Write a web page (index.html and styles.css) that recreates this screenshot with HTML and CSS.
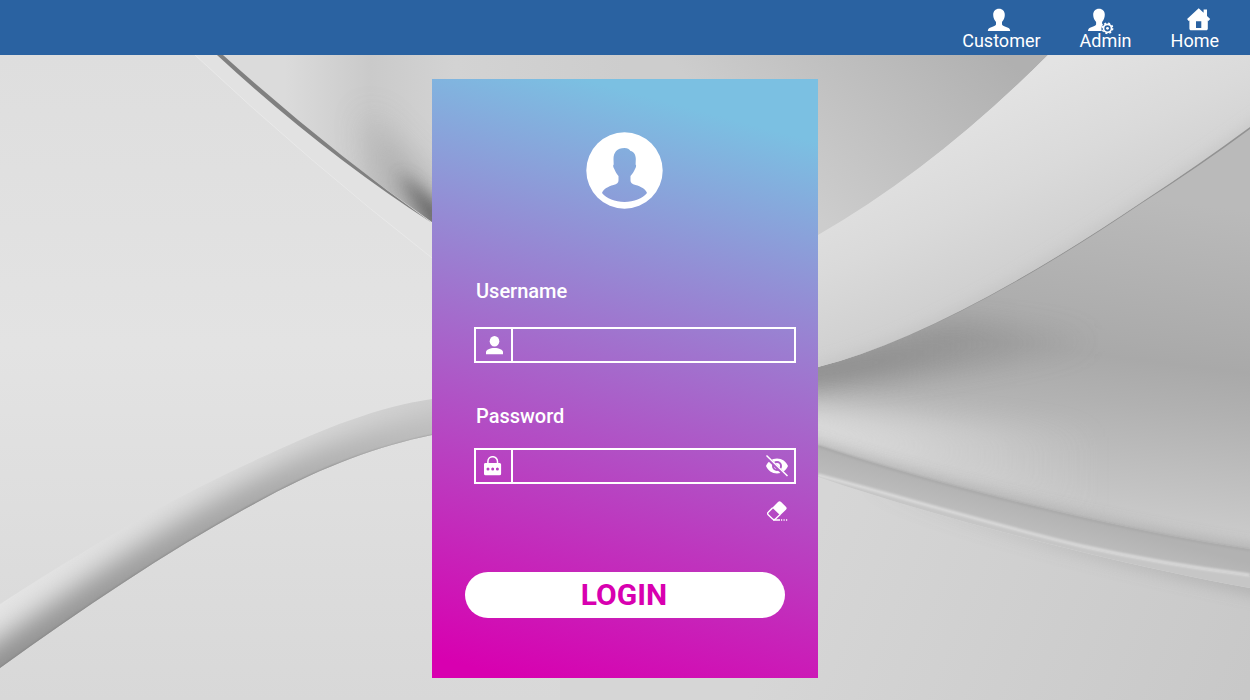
FILE: index.html
```html
<!DOCTYPE html>
<html lang="en">
<head>
<meta charset="utf-8">
<meta name="viewport" content="width=device-width, initial-scale=1">
<title>Login</title>
<link rel="stylesheet" href="styles.css">
</head>
<body class="page">
<header class="topbar">
  <nav class="topbar-nav" aria-label="Main">
    <a class="nav-link" href="#customer">
      <svg class="nav-icon" viewBox="0 0 32 23" aria-hidden="true"><path fill="currentColor" d="M14 .8c3.600 0 5.800 2.500 5.800 6.200 0 3-1.300 5.200-2.800 7v2.500c.5 1.700 3.500 2.200 6 3.200 1.500.7 2.100 1.700 2.200 3.300H2.800c.1-1.600.7-2.600 2.200-3.300 2.500-1 5.500-1.500 6-3.200V14c-1.500-1.800-2.800-4-2.800-7 0-3.700 2.200-6.200 5.800-6.200z"/></svg>
      <span>Customer</span>
    </a>
    <a class="nav-link" href="#admin">
      <svg class="nav-icon" viewBox="3 0 32 23" aria-hidden="true">
        <path fill="currentColor" d="M12 .8c3.600 0 5.800 2.500 5.800 6 0 3-1.200 5.200-2.700 7.200v1.500l.9 1.200c-1.600 1.500-2 4-1.200 6.300H1c.1-1.600.7-2.700 2-3.300 2.500-1 5.600-1.500 6.100-3.200V14C7.600 12.200 6.200 10 6.200 7c0-3.700 2.200-6.200 5.800-6.200z"/>
        <circle cx="20.500" cy="20.300" r="5.200" fill="none" stroke="currentColor" stroke-width="1.400" stroke-dasharray="2.040 2.040"/>
        <circle cx="20.500" cy="20.300" r="4" fill="none" stroke="currentColor" stroke-width="1.700"/>
        <circle cx="20.500" cy="20.300" r="1.400" fill="currentColor"/>
      </svg>
      <span>Admin</span>
    </a>
    <a class="nav-link" href="#home">
      <svg class="nav-icon" viewBox="0 0 32 23" aria-hidden="true"><path fill="currentColor" fill-rule="evenodd" d="M19.700.3 24.600 4.700V1.500H28v6.400l3.200 3-1.800 2-.6-.5v8.400c0 .9-.7 1.500-1.500 1.500H12c-.9 0-1.600-.6-1.600-1.500v-8.400l-.8.500-1.500-2zM17 13.200v6.900h5.300v-6.900z"/></svg>
      <span>Home</span>
    </a>
  </nav>
</header>

<main class="stage">
  <svg class="backdrop" viewBox="0 55 1250 645" preserveAspectRatio="xMidYMid slice" aria-hidden="true">
    <defs>
      <linearGradient id="base" x1="0" y1="55" x2="0" y2="700" gradientUnits="userSpaceOnUse"><stop offset="0" stop-color="#dedede"/><stop offset=".45" stop-color="#e3e3e3"/><stop offset="1" stop-color="#d8d8d8"/></linearGradient>
      <linearGradient id="upperLeft" x1="285" y1="0" x2="625" y2="0" gradientUnits="userSpaceOnUse"><stop offset="0" stop-color="#dbdbdb"/><stop offset=".25" stop-color="#cacaca"/><stop offset=".5" stop-color="#d3d3d3"/><stop offset="1" stop-color="#cdcdcd"/></linearGradient>
      <linearGradient id="upperRight" x1="830" y1="230" x2="1010" y2="60" gradientUnits="userSpaceOnUse"><stop offset="0" stop-color="#cdcdcd"/><stop offset="1" stop-color="#b0b0b0"/></linearGradient>
      <linearGradient id="ribbon" x1="930" y1="120" x2="1010" y2="290" gradientUnits="userSpaceOnUse"><stop offset="0" stop-color="#e3e3e3"/><stop offset=".5" stop-color="#dadada"/><stop offset="1" stop-color="#cecece"/></linearGradient>
      <linearGradient id="hollow" x1="1080" y1="190" x2="1040" y2="510" gradientUnits="userSpaceOnUse"><stop offset="0" stop-color="#bababa"/><stop offset=".5" stop-color="#a9a9a9"/><stop offset=".64" stop-color="#b1b1b1"/><stop offset="1" stop-color="#cacaca"/></linearGradient>
      <linearGradient id="fadeDark" x1="818" y1="0" x2="1100" y2="0" gradientUnits="userSpaceOnUse"><stop offset="0" stop-color="#7c7c7c"/><stop offset="1" stop-color="#7c7c7c" stop-opacity="0"/></linearGradient>
      <linearGradient id="fadeLight" x1="818" y1="0" x2="1100" y2="0" gradientUnits="userSpaceOnUse"><stop offset="0" stop-color="#e4e4e4"/><stop offset="1" stop-color="#e4e4e4" stop-opacity="0"/></linearGradient>
      <linearGradient id="floor" x1="830" y1="500" x2="1250" y2="680" gradientUnits="userSpaceOnUse"><stop offset="0" stop-color="#d6d6d6"/><stop offset="1" stop-color="#c8c8c8"/></linearGradient>
      <linearGradient id="floorShade" x1="860" y1="0" x2="1250" y2="0" gradientUnits="userSpaceOnUse"><stop offset="0" stop-color="#a6a6a6" stop-opacity="0"/><stop offset="1" stop-color="#a6a6a6"/></linearGradient>
      <linearGradient id="rail" x1="1040" y1="507" x2="1032" y2="537" gradientUnits="userSpaceOnUse"><stop offset="0" stop-color="#b2b2b2"/><stop offset="1" stop-color="#bebebe"/></linearGradient>
      <linearGradient id="tube" x1="0" y1="0" x2="432" y2="0" gradientUnits="userSpaceOnUse"><stop offset="0" stop-color="#e4e4e4"/><stop offset=".6" stop-color="#dcdcdc"/><stop offset="1" stop-color="#cfcfcf"/></linearGradient>
      <linearGradient id="tubeShade" x1="0" y1="0" x2="432" y2="0" gradientUnits="userSpaceOnUse"><stop offset="0" stop-color="#909090"/><stop offset=".6" stop-color="#a8a8a8"/><stop offset="1" stop-color="#bcbcbc"/></linearGradient>
      <filter id="b1" filterUnits="userSpaceOnUse" x="-100" y="0" width="1450" height="800"><feGaussianBlur stdDeviation="1"/></filter>
      <filter id="b8" filterUnits="userSpaceOnUse" x="-100" y="0" width="1450" height="800"><feGaussianBlur stdDeviation="8"/></filter>
      <filter id="b12" filterUnits="userSpaceOnUse" x="-100" y="0" width="1450" height="800"><feGaussianBlur stdDeviation="13"/></filter>
      <filter id="b16" filterUnits="userSpaceOnUse" x="-100" y="0" width="1450" height="800"><feGaussianBlur stdDeviation="16"/></filter>
      <clipPath id="cUpper"><path d="M221 55Q325 148 432 222L818 300V236Q935 168 1048 55Z"/></clipPath>
      <clipPath id="cRibbon"><path d="M1048 55Q935 168 818 235L760 270V380L818 367Q945 335 1142 202Q1200 164 1250 128V55Z"/></clipPath>
      <clipPath id="cHollow"><path d="M760 380 818 367Q945 335 1142 202Q1200 164 1250 128V549C1195 541 1140 530 1082 517C990 496 905 474 818 445L760 428Z"/></clipPath>
      <clipPath id="cTube"><path d="M-20 617 0 604C90 546 180 493 267 455C325 428 378 407 432 399L450 397V432L432 435C378 446 325 466 267 497C180 543 90 603 0 668L-20 682Z"/></clipPath>
      <clipPath id="cFloor"><path d="M760 460 818 477C905 506 990 530 1082 552C1140 566 1195 578 1250 588V700H760Z"/></clipPath>
    </defs>
    <rect y="55" width="1250" height="645" fill="url(#base)"/>
    <path fill="#e2e2e2" d="M195 55Q308 161 432 258V222Q322 150 217 55Z"/>
    <path fill="none" stroke="#e9e9e9" stroke-width="1" d="M195 55Q308 161 432 258"/>

    <g clip-path="url(#cUpper)">
      <rect x="200" y="55" width="426" height="250" fill="url(#upperLeft)"/>
      <rect x="625" y="55" width="435" height="250" fill="url(#upperRight)"/>
      <path fill="#a2a2a2" opacity=".7" filter="url(#b16)" d="M365 110 385 215 460 270 440 190Z"/>
      <path fill="#585858" opacity=".85" filter="url(#b8)" d="M398 172 440 250 465 226Z"/>
    </g>
    <path fill="#808080" d="M217 55Q322 152 432 223Q326 148 223 55Z"/>

    <g clip-path="url(#cHollow)">
      <rect x="750" y="120" width="500" height="440" fill="url(#hollow)"/>
      <path fill="url(#fadeDark)" opacity=".8" filter="url(#b12)" d="M740 360H820L960 320 1110 330V350L900 378 740 392Z"/>
      <path fill="url(#fadeLight)" opacity=".75" filter="url(#b12)" d="M740 402 880 412 1110 430V520L740 440Z"/>
      <path fill="none" stroke="#969696" stroke-width="9" opacity=".8" filter="url(#b8)" d="M780 437L818 449C905 478 990 500 1082 521C1140 534 1195 545 1280 558"/>
    </g>

    <g clip-path="url(#cRibbon)">
      <rect x="750" y="55" width="500" height="340" fill="url(#ribbon)"/>
      <path fill="none" stroke="#b8b8b8" stroke-width="6" filter="url(#b8)" d="M818 371Q945 339 1142 206Q1200 168 1270 118"/>
    </g>
    <path fill="#929292" d="M818 367Q945 335 1142 202Q1200 164 1250 127V129Q1200 166 1142 203Q945 336 818 367Z"/>

    <path fill="url(#floor)" d="M760 460 818 477C905 506 990 530 1082 552C1140 566 1195 578 1250 588V700H560V640Z"/>
    <g clip-path="url(#cFloor)"><path fill="none" stroke="url(#floorShade)" stroke-width="14" opacity=".8" filter="url(#b8)" d="M860 484C990 530 1140 564 1290 594"/></g>
    <path fill="url(#rail)" d="M760 428 818 445C905 474 990 496 1082 517C1140 530 1195 541 1250 549V576C1195 569 1140 560 1082 547C990 524 905 498 818 475L760 460Z"/>
    <path fill="#c6c6c6" d="M818 475C905 498 990 524 1082 547C1140 560 1195 569 1250 576V588C1195 578 1140 566 1082 552C990 530 905 506 818 477Z"/>
    <path fill="none" stroke="#a8a8a8" stroke-width="2" filter="url(#b1)" d="M818 446C905 475 990 497 1082 518C1140 531 1195 542 1250 550"/>
    <path fill="none" stroke="#dadada" stroke-width="3" filter="url(#b1)" d="M818 475C905 498 990 524 1082 546C1140 559 1195 568 1250 575"/>

    <g clip-path="url(#cTube)">
      <rect x="-20" y="380" width="480" height="310" fill="url(#tube)"/>
      <path fill="none" stroke="url(#tubeShade)" stroke-width="58" filter="url(#b12)" d="M-60 720L0 676C90 611 180 551 267 505C325 474 378 454 500 430"/>
      <path fill="none" stroke="#858585" stroke-width="3" filter="url(#b1)" d="M-20 683L0 669C90 604 180 544 267 498C325 467 378 447 450 433"/>
    </g>
  </svg>

  <form class="card" action="#" method="post">
    <svg class="avatar" viewBox="0 0 78 77" aria-hidden="true"><path fill="currentColor" fill-rule="evenodd" d="M38.500.3a38.200 38.200 0 1 1 0 76.400 38.200 38.200 0 0 1 0-76.400zM38.500 16c-7.500 0-11 4.500-11 11 0 2 .2 4 .2 5.500-1 .8-.4 3 .6 4.500.8 2.500 2.600 5 4.200 7v4.500c0 2-1.500 3.500-5 4.500-5.500 1.500-10 4-11.500 8 4.500 5.500 13 9 22.500 9s18-3.500 22.500-9c-1.500-4-6-6.500-11.500-8-3.500-1-5-2.500-5-4.500V44c1.600-2 3.700-4.500 4.500-7 1-1.500 1.600-3.700.6-4.500 0-1.500.2-3.500.2-5.500 0-4-1.800-7.500-5.300-8-1.200-2-3-3-6-3z"/></svg>

    <div class="group group-user">
      <label class="label" for="username">Username</label>
      <div class="field">
        <span class="field-icon">
          <svg class="glyph" viewBox="0 0 20 20" aria-hidden="true"><ellipse cx="10.500" cy="6.300" rx="4.800" ry="5.200" fill="currentColor"/><path fill="currentColor" d="M2 19.300V17c0-2 4-4 8.500-4s8.500 2 8.500 4v2.300z"/></svg>
        </span>
        <input class="input" id="username" name="username" type="text" autocomplete="username">
      </div>
    </div>

    <div class="group group-pass">
      <label class="label" for="password">Password</label>
      <div class="field">
        <span class="field-icon">
          <svg class="glyph" viewBox="0 0 20 20" aria-hidden="true"><path fill="none" stroke="currentColor" stroke-width="1.500" d="M3.900 8V5.500a4.800 4.800 0 0 1 9.600 0V8"/><path fill="currentColor" fill-rule="evenodd" d="M1.600 7h14a1.500 1.500 0 0 1 1.500 1.500v9.200a1.600 1.600 0 0 1-1.600 1.600H1.600A1.600 1.600 0 0 1 0 17.700V8.500A1.500 1.500 0 0 1 1.600 7zM4 11.400a1.500 1.500 0 1 0 0 3 1.500 1.500 0 0 0 0-3zm4.700 0a1.500 1.500 0 1 0 0 3 1.500 1.500 0 0 0 0-3zm4.700 0a1.500 1.500 0 1 0 0 3 1.500 1.500 0 0 0 0-3z"/></svg>
        </span>
        <input class="input" id="password" name="password" type="password" autocomplete="current-password">
        <button class="icon-button reveal" type="button" aria-label="Show password">
          <svg class="tool" viewBox="0 0 24 24" aria-hidden="true">
            <defs><mask id="slash"><rect width="24" height="24" fill="#fff"/><path stroke="#000" stroke-width="3.400" d="m1 2.500 21 20.500"/></mask></defs>
            <g mask="url(#slash)"><path fill="currentColor" fill-rule="evenodd" d="M12 4.500c5 0 9.200 3.100 11 7.500-1.800 4.400-6 7.500-11 7.500S2.800 16.400 1 12c1.800-4.400 6-7.500 11-7.500zM12 7a5 5 0 1 0 0 10 5 5 0 0 0 0-10z"/><circle cx="12" cy="12" r="3" fill="currentColor"/></g>
            <path stroke="currentColor" stroke-width="1.500" d="m1.500 1.500 21 20.500"/>
          </svg>
        </button>
      </div>
    </div>

    <div class="actions">
      <button class="icon-button" type="reset" aria-label="Clear form">
        <svg class="tool" viewBox="0 0 24 24" aria-hidden="true"><path fill="currentColor" d="M13 3.100a2.200 2.200 0 0 1 3.100 0l4.800 4.600a2.200 2.200 0 0 1 0 3.100l-5.700 5.500-7.900-7.600z"/><path fill="none" stroke="currentColor" stroke-width="1.400" stroke-linejoin="round" d="m7.700 8.700-4.500 4.500a1.700 1.700 0 0 0 0 2.500l4.400 4.300c.4.400.8.600 1.400.600.6 0 1-.3 1.400-.7l4.700-4.300"/><path stroke="currentColor" stroke-width="1.500" d="M8 21h7m1 0h1.200m1.300 0h1.200m1.300 0h1.200"/></svg>
      </button>
    </div>

    <button class="login" type="submit">LOGIN</button>
  </form>
</main>
</body>
</html>
```
FILE: styles.css
```css
*,
*::before,
*::after {
  box-sizing: border-box;
}

.page {
  display: flex;
  flex-direction: column;
  min-height: 100vh;
  margin: 0;
  font-family: Roboto, "Liberation Sans", sans-serif;
  color: #fff;
}

.topbar {
  padding: 8px 31px 4px;
  background: #2a62a1;
}

.topbar-nav {
  display: flex;
  justify-content: flex-end;
  gap: 39px;
}

.nav-link {
  display: flex;
  flex-direction: column;
  align-items: center;
  color: inherit;
  font-size: 18px;
  line-height: 20px;
  text-decoration: none;
}

.nav-icon {
  width: 32px;
  height: 23px;
  overflow: visible;
}

.stage {
  position: relative;
  flex: 1;
  display: flex;
  justify-content: center;
  align-items: flex-start;
  padding: 24px 16px 22px;
  background: #dedede;
}

.backdrop {
  position: absolute;
  inset: 0;
  width: 100%;
  height: 100%;
}

.card {
  position: relative;
  display: flex;
  flex-direction: column;
  width: 100%;
  max-width: 386px;
  padding: 53px 0 60px;
  background: linear-gradient(195deg, #7bc0e2 9%, #d800b0 97%);
}

.avatar {
  align-self: center;
  width: 78px;
  height: 77px;
}

.group {
  display: flex;
  flex-direction: column;
  padding: 0 22px 0 42px;
}

.group-user {
  gap: 24px;
  margin-top: 70px;
}

.group-pass {
  gap: 20px;
  margin-top: 41px;
}

.label {
  padding-left: 2px;
  font-size: 20px;
  font-weight: 500;
  line-height: 24px;
}

.field {
  display: flex;
  height: 36px;
  border: 2px solid #fff;
}

.field-icon {
  flex: none;
  display: flex;
  align-items: center;
  justify-content: center;
  width: 37px;
  border-right: 2px solid #fff;
}

.glyph {
  width: 20px;
  height: 20px;
}

.input {
  flex: 1;
  min-width: 0;
  padding: 0 8px;
  border: 0;
  outline: 0;
  background: transparent;
  color: inherit;
  font: inherit;
}

.icon-button {
  display: flex;
  align-items: center;
  padding: 0;
  border: 0;
  background: transparent;
  color: inherit;
  cursor: pointer;
}

.reveal {
  margin-right: 5px;
}

.tool {
  width: 24px;
  height: 24px;
}

.actions {
  display: flex;
  justify-content: flex-end;
  margin-top: 15px;
  padding-right: 29px;
}

.login {
  height: 46px;
  margin: 49px 33px 0;
  padding: 0 2px 2px 0;
  border: 0;
  border-radius: 23px;
  background: #fff;
  color: #d800b0;
  font: bold 30px Roboto, "Liberation Sans", sans-serif;
  cursor: pointer;
}
```
